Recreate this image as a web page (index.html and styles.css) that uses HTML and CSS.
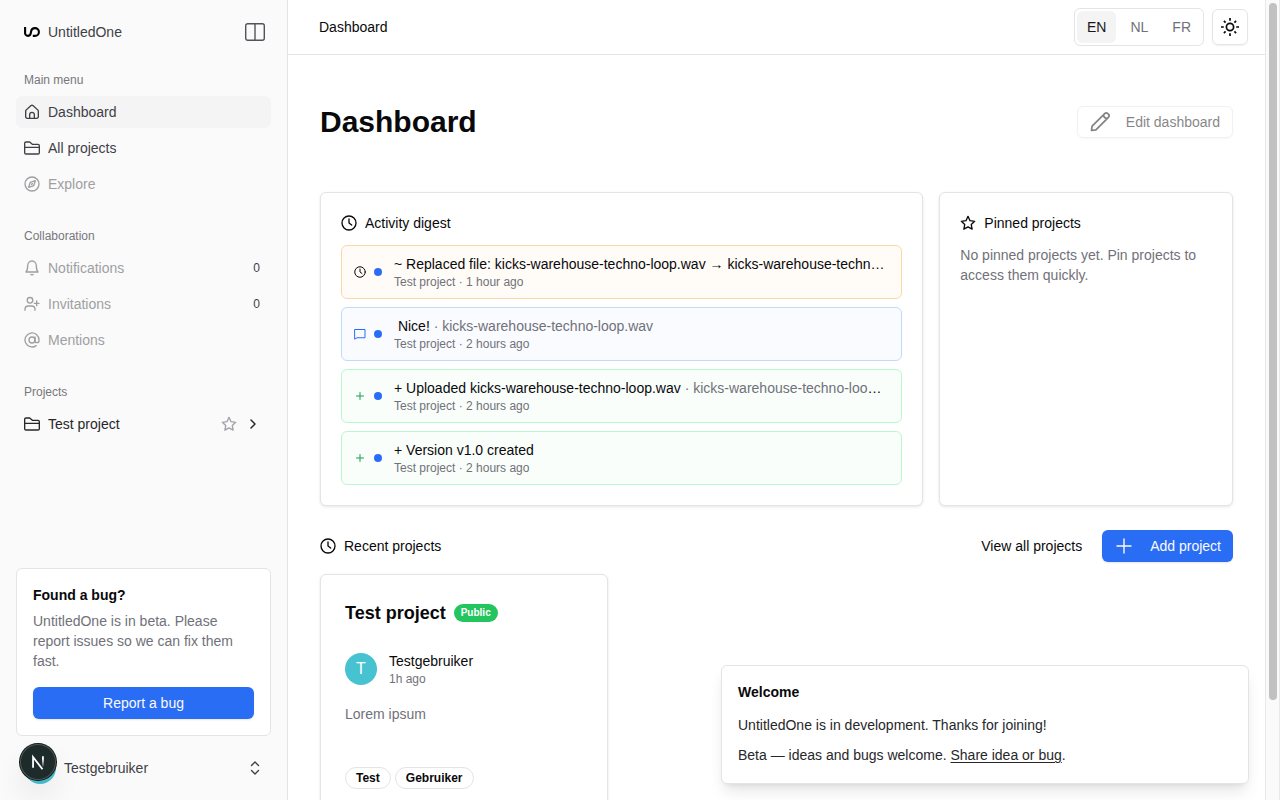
FILE: index.html
```html
<!DOCTYPE html>
<html lang="en">
<head>
<meta charset="utf-8">
<meta name="viewport" content="width=device-width, initial-scale=1">
<title>Dashboard – UntitledOne</title>
<link rel="stylesheet" href="styles.css">
</head>
<body>
<svg class="sprite" aria-hidden="true">
  <symbol id="clock" viewBox="0 0 24 24"><circle cx="12" cy="12" r="10.500"/><path d="M12 6v6l4 3"/></symbol>
  <symbol id="folder" viewBox="0 0 24 24"><path d="M1 11V5a2 2 0 0 1 2-2h5.500l4 3.500H21a2 2 0 0 1 2 2V19a2 2 0 0 1-2 2H3a2 2 0 0 1-2-2zM1 11h22"/></symbol>
  <symbol id="star" viewBox="0 0 24 24"><path d="M12 2l3 6.500 7 1-5.100 4.900 1.300 6.900L12 17.900l-6.200 3.400 1.300-6.900L2 9.500l7-1z"/></symbol>
  <symbol id="plus" viewBox="0 0 24 24"><path d="M5 12h14M12 5v14"/></symbol>
</svg>
<div class="app">
  <aside class="sidebar">
    <div class="brand">
      <svg class="logo" viewBox="0 0 16 16" aria-hidden="true"><path d="M1.100 3v5.400a3 3 0 0 0 3 3.500c1.900 0 2.700-1.600 2.900-3.900.2-2.500 1.500-3.900 4-3.900a3.900 3.900 0 0 1 0 7.800H8.800"/></svg>
      <span class="brand-name">UntitledOne</span>
      <button class="toggle" type="button" aria-label="Toggle sidebar"><svg viewBox="0 0 20 20"><rect x="0.700" y="1.700" width="18.600" height="16.600" rx="2"/><path d="M10 2v16"/></svg></button>
    </div>
    <nav class="menu" aria-label="Main menu">
      <h2>Main menu</h2>
      <a class="item active" href="#dashboard"><svg class="icon" viewBox="0 0 24 24"><path d="M2.500 11a3 3 0 0 1 1-2.200L10.200 2.500a2.700 2.700 0 0 1 3.600 0L20.500 8.800a3 3 0 0 1 1 2.200v8a2.500 2.500 0 0 1-2.500 2.500H5A2.500 2.500 0 0 1 2.500 19z"/><path d="M8.500 21.500V16a3.500 3.500 0 0 1 7 0v5.500"/></svg>Dashboard</a>
      <a class="item" href="#projects"><svg class="icon"><use href="#folder"/></svg>All projects</a>
      <a class="item off" href="#explore"><svg class="icon" viewBox="0 0 24 24"><circle cx="12" cy="12" r="10.500"/><path d="M17 7l-2.500 7.500L7 17l2.500-7.500z"/><path d="M11.500 12.500l1-1"/></svg>Explore</a>
    </nav>
    <nav class="menu" aria-label="Collaboration">
      <h2>Collaboration</h2>
      <a class="item off" href="#notifications"><svg class="icon" viewBox="0 0 24 24"><path d="M18.500 8.500C18.500 4.500 15.700 1.500 12 1.500S5.500 4.500 5.500 8.500C5.500 15.500 3 18 3 18h18s-2.500-2.500-2.500-9.500zM13.800 21.500a2 2 0 0 1-3.600 0"/></svg>Notifications<span class="count">0</span></a>
      <a class="item off" href="#invitations"><svg class="icon" viewBox="0 0 24 24"><path d="M16.500 21.500V20a5 5 0 0 0-5-5h-5a5 5 0 0 0-5 5v1.500M19 7.500v7M15.500 11h7"/><circle cx="9" cy="6.500" r="4.200"/></svg>Invitations<span class="count">0</span></a>
      <a class="item off" href="#mentions"><svg class="icon" viewBox="0 0 24 24"><circle cx="12" cy="12" r="4.500"/><path d="M16.500 7.500V13a3 3 0 0 0 6 0v-1a10.500 10.500 0 1 0-4.300 8.400"/></svg>Mentions</a>
    </nav>
    <nav class="menu" aria-label="Projects">
      <h2>Projects</h2>
      <a class="item strong" href="#test"><svg class="icon"><use href="#folder"/></svg>Test project<svg class="icon fav"><use href="#star"/></svg><svg class="icon chevron" viewBox="0 0 16 16"><path d="M6 4l4 4-4 4"/></svg></a>
    </nav>
    <section class="bug">
      <h2>Found a bug?</h2>
      <p>UntitledOne is in beta. Please report issues so we can fix them fast.</p>
      <button class="primary" type="button">Report a bug</button>
    </section>
    <button class="user" type="button">
      <span class="avatar">T</span>
      <span>Testgebruiker</span>
      <svg class="icon updown" viewBox="0 0 16 16"><path d="M4.500 5.500L8 2l3.500 3.500M4.500 10.500L8 14l3.500-3.500"/></svg>
    </button>
  </aside>

  <div class="page">
    <header class="topbar">
      <span>Dashboard</span>
      <div class="tools">
        <div class="langs" role="group" aria-label="Language">
          <button class="current" type="button">EN</button><button type="button">NL</button><button type="button">FR</button>
        </div>
        <button class="theme" type="button" aria-label="Toggle theme"><svg viewBox="0 0 20 20"><circle cx="10" cy="10" r="3.600"/><path d="M10 1v2.800M10 16.200V19M1 10h2.800M16.200 10H19M3.900 3.900l1.700 1.700M14.400 14.400l1.700 1.700M3.900 16.100l1.700-1.700M14.400 5.600l1.700-1.700"/></svg></button>
      </div>
    </header>
    <main class="content">
      <div class="heading">
        <h1>Dashboard</h1>
        <button class="btn edit" type="button"><svg viewBox="0 0 24 24"><path d="M3.500 20.500l.6-4.400L16.700 3.600a2.200 2.200 0 0 1 3.100 0l.6.600a2.200 2.200 0 0 1 0 3.100L7.900 19.900zM15.600 4.800q0 3.600 3.600 3.600"/></svg>Edit dashboard</button>
      </div>
      <div class="widgets">
        <section class="card digest">
          <h2><svg class="icon"><use href="#clock"/></svg>Activity digest</h2>
          <ul>
            <li class="orange"><svg class="mini"><use href="#clock"/></svg><i class="dot"></i><div><p>~ Replaced file: kicks-warehouse-techno-loop.wav → kicks-warehouse-techno-loop.wav</p><small>Test project · 1 hour ago</small></div></li>
            <li class="blue"><svg class="mini" viewBox="0 0 24 24"><path d="M2 3h20v16.500H6l-4 2.500z"/></svg><i class="dot"></i><div><p>&nbsp;Nice! <span>· kicks-warehouse-techno-loop.wav</span></p><small>Test project · 2 hours ago</small></div></li>
            <li class="green"><svg class="mini"><use href="#plus"/></svg><i class="dot"></i><div><p>+ Uploaded kicks-warehouse-techno-loop.wav <span>· kicks-warehouse-techno-loop.wav</span></p><small>Test project · 2 hours ago</small></div></li>
            <li class="green"><svg class="mini"><use href="#plus"/></svg><i class="dot"></i><div><p>+ Version v1.0 created</p><small>Test project · 2 hours ago</small></div></li>
          </ul>
        </section>
        <section class="card pinned">
          <h2><svg class="icon"><use href="#star"/></svg>Pinned projects</h2>
          <p>No pinned projects yet. Pin projects to access them quickly.</p>
        </section>
      </div>
      <div class="recent">
        <h2><svg class="icon"><use href="#clock"/></svg>Recent projects</h2>
        <a href="#projects">View all projects</a>
        <button class="btn primary" type="button"><svg><use href="#plus"/></svg>Add project</button>
      </div>
      <div class="projects">
        <article class="card project">
          <div class="name"><h3>Test project</h3><span class="badge">Public</span></div>
          <div class="owner"><span class="avatar">T</span><div><p>Testgebruiker</p><small>1h ago</small></div></div>
          <p class="about">Lorem ipsum</p>
          <div class="tags"><span>Test</span><span>Gebruiker</span></div>
        </article>
      </div>
    </main>
  </div>
  <div class="scrollbar" aria-hidden="true"><div class="thumb"></div></div>
</div>
<section class="toast" role="status">
  <h2>Welcome</h2>
  <p>UntitledOne is in development. Thanks for joining!</p>
  <p>Beta — ideas and bugs welcome. <a href="#feedback">Share idea or bug</a>.</p>
</section>
<button class="devtools" type="button" aria-label="Open developer tools">
  <svg viewBox="0 0 40 40"><defs><linearGradient id="fade" gradientUnits="userSpaceOnUse" x1="0" y1="12" x2="0" y2="28"><stop offset="0.300" stop-color="#fff"/><stop offset="0.900" stop-color="#fff" stop-opacity="0"/></linearGradient></defs><path d="M14.500 26.500V14.500l10.500 13.500" stroke="#fff"/><path d="M25.500 13.500V25" stroke="url(#fade)"/></svg>
</button>
</body>
</html>
```

FILE: styles.css
```css
* { box-sizing: border-box; margin: 0; padding: 0; }
body {
  font-family: "Liberation Sans", Arial, sans-serif;
  font-size: 14px;
  line-height: 20px;
  color: #09090b;
  background: #fff;
  overflow: hidden;
}
button { font: inherit; color: inherit; background: none; border: 0; cursor: pointer; }
a { color: inherit; text-decoration: none; }
ul { list-style: none; }
h2 { font-size: 14px; font-weight: 400; }
small { display: block; font-size: 12px; line-height: 16px; color: #71717a; }
svg { display: block; flex: none; fill: none; stroke: currentColor; stroke-width: 2; stroke-linecap: round; stroke-linejoin: round; }
.sprite { position: absolute; width: 0; height: 0; }
.icon { width: 16px; height: 16px; }

.app { display: flex; height: 100vh; }

/* Sidebar */
.sidebar {
  display: flex;
  flex-direction: column;
  flex: none;
  width: 288px;
  padding: 16px 16px 8px;
  background: #fafafa;
  border-right: 1px solid #e4e4e7;
  color: #3f3f46;
}
.brand { display: flex; align-items: center; gap: 8px; height: 32px; margin-bottom: 16px; padding: 0 6px 0 8px; }
.logo { width: 16px; height: 16px; color: #000; stroke-width: 2.100; stroke-linecap: butt; }
.toggle { margin-left: auto; }
.toggle svg { width: 20px; height: 20px; stroke-width: 1.400; color: #52525b; }
.menu { display: flex; flex-direction: column; gap: 4px; margin-bottom: 20px; }
.menu h2 { margin-bottom: -4px; padding: 0 8px; font-size: 12px; line-height: 32px; color: #77777b; }
.item { display: flex; align-items: center; gap: 8px; height: 32px; padding: 0 10px 0 8px; border-radius: 6px; }
.item.active { background: #f4f4f5; }
.item.off { color: #9f9fa3; }
.item.strong { color: #27272a; }
.count { margin-left: auto; padding-right: 1px; font-size: 12px; color: #3f3f46; }
.fav { margin-left: auto; color: #a1a1aa; }
.chevron { stroke-width: 1.500; }
.bug { margin-top: auto; padding: 16px; background: #fff; border: 1px solid #e4e4e7; border-radius: 6px; }
.bug h2 { font-weight: 700; color: #09090b; }
.bug p { margin: 6px 0 16px; color: #71717a; }
.primary { height: 32px; border-radius: 6px; background: #2a6df5; color: #fafafa; box-shadow: 0 1px 2px rgba(0, 0, 0, 0.100); }
.bug .primary { width: 100%; }
.user { display: flex; align-items: center; gap: 8px; height: 48px; margin-top: 8px; padding: 0 8px; }
.avatar { display: grid; place-items: center; flex: none; width: 32px; height: 32px; border-radius: 50%; background: #47c2d1; color: #fff; font-size: 16px; }
.updown { margin-left: auto; stroke-width: 1.400; }

/* Page */
.page { display: flex; flex-direction: column; flex: 1; min-width: 0; }
.topbar { display: flex; align-items: center; justify-content: space-between; flex: none; height: 55px; padding: 0 17px 0 31px; border-bottom: 1px solid #e4e4e7; }
.tools { display: flex; align-items: center; gap: 8px; }
.langs { display: flex; gap: 4px; padding: 2px; border: 1px solid #e4e4e7; border-radius: 6px; }
.langs button { height: 32px; padding: 0 10px; border-radius: 6px; color: #71717a; }
.langs .current { background: #f4f4f5; color: #18181b; }
.theme { display: grid; place-items: center; width: 36px; height: 36px; border: 1px solid #e4e4e7; border-radius: 6px; box-shadow: 0 1px 2px rgba(0, 0, 0, 0.060); }
.theme svg { width: 20px; height: 20px; stroke-width: 1.700; stroke-linecap: butt; }
.content { flex: 1; min-height: 0; padding: 48px 32px; overflow-y: auto; scrollbar-width: none; }
.heading { display: flex; align-items: center; justify-content: space-between; height: 38px; margin-bottom: 51px; }
h1 { font-size: 30px; line-height: 36px; font-weight: 700; }
.btn { display: flex; align-items: center; gap: 14px; height: 32px; padding: 0 12px 0 10px; border-radius: 6px; }
.btn svg { width: 24px; height: 24px; stroke-width: 1.500; }
.edit { border: 1px solid #e4e4e7; box-shadow: 0 1px 2px rgba(0, 0, 0, 0.060); opacity: 0.500; }
.edit svg { stroke-width: 1.700; }
.btn.primary svg { stroke-width: 1.400; }
.widgets { display: grid; grid-template-columns: repeat(12, 1fr); gap: 16px; }
.card { min-width: 0; border: 1px solid #e4e4e7; border-radius: 6px; background: #fff; box-shadow: 0 1px 3px rgba(0, 0, 0, 0.100); }
.digest { grid-column: span 8; padding: 20px; }
.pinned { grid-column: span 4; padding: 20px; }
.card h2, .recent h2 { display: flex; align-items: center; gap: 8px; }
.pinned p { margin-top: 12px; color: #71717a; }
.digest ul { display: grid; gap: 8px; margin-top: 12px; }
.digest li { display: flex; align-items: center; min-width: 0; padding: 8px 14px 8px 12px; border: 1px solid; border-radius: 6px; }
.digest li div { flex: 1; min-width: 0; }
.digest li p { overflow: hidden; white-space: nowrap; text-overflow: ellipsis; }
.digest li span { color: #71717a; }
.mini { width: 12px; height: 12px; margin-right: 8px; }
.dot { width: 8px; height: 8px; margin-right: 12px; border-radius: 50%; background: #2a6df5; }
.digest .orange { background: #fffcf8; border-color: #ffd6a7; }
.digest .blue { background: #f9fbff; border-color: #bedbff; }
.digest .green { background: #f9fefb; border-color: #b9f8cf; }
.blue .mini { color: #2a6df5; }
.green .mini { color: #16a34a; }
.recent { display: flex; align-items: center; gap: 20px; margin: 24px 0 12px; }
.recent h2 { margin-right: auto; }
.projects { display: grid; grid-template-columns: repeat(3, 1fr); gap: 24px; }
.project { padding: 24px; }
.name { display: flex; align-items: center; gap: 8px; }
h3 { font-size: 18px; line-height: 28px; font-weight: 700; }
.badge { padding: 0 7px; border-radius: 9px; background: #22c55e; color: #fff; font-size: 10px; line-height: 18px; font-weight: 700; }
.owner { display: flex; align-items: center; gap: 12px; margin-top: 24px; }
.about { min-height: 48px; margin: 16px 0; line-height: 22px; color: #71717a; }
.tags { display: flex; gap: 4px; }
.tags span { padding: 0 10px; border: 1px solid #e4e4e7; border-radius: 11px; font-size: 12px; line-height: 20px; font-weight: 700; }

/* Scroll track */
.scrollbar { flex: none; width: 15px; padding: 3px 2px 0 3px; background: #fafafa; border: 1px solid #e8e8e8; border-width: 0 1px; }
.thumb { height: 697px; max-height: 88vh; border-radius: 4px; background: #c1c1c1; }

/* Overlays */
.toast { position: absolute; right: 31px; bottom: 16px; width: 528px; padding: 16px 16px 18px; background: #fff; border: 1px solid #e4e4e7; border-radius: 6px; box-shadow: 0 10px 15px -3px rgba(0, 0, 0, 0.100), 0 4px 6px -4px rgba(0, 0, 0, 0.100); color: #27272a; }
.toast h2 { margin-bottom: 13px; font-weight: 700; color: #09090b; }
.toast p + p { margin-top: 10px; }
.toast a { text-decoration: underline; text-underline-offset: 2px; }
.devtools { position: absolute; left: 20px; bottom: 20px; width: 36px; height: 36px; border-radius: 50%; background: #1d2b2b; box-shadow: 0 0 0 1px #171717, inset 0 0 0 1px #4b5656, 0 16px 32px -8px rgba(0, 0, 0, 0.240); }
.devtools svg { width: 36px; height: 36px; stroke-linecap: butt; stroke-linejoin: miter; }
```
